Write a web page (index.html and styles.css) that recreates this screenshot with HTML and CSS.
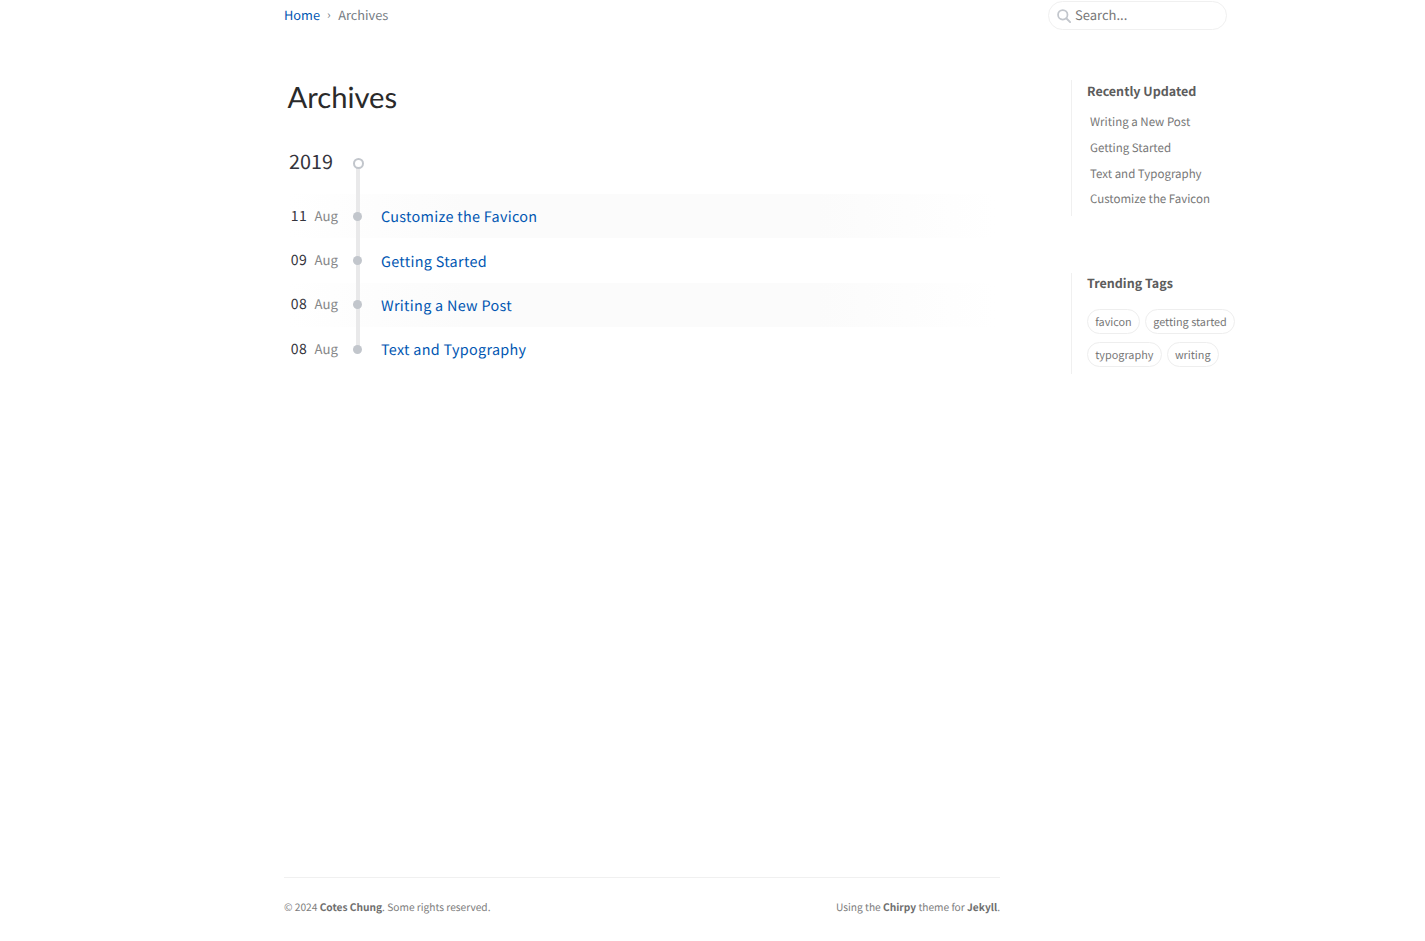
FILE: index.html
```html
<!DOCTYPE html>
<html lang="en">
<head>
<meta charset="utf-8">
<title>Archives</title>
<link rel="stylesheet" href="styles.css">
</head>
<body>
<div class="page">
  <div class="main-col">
    <nav class="breadcrumb"><a href="#">Home</a><span class="sep">›</span><span class="current">Archives</span></nav>
    <h1 class="title">Archives</h1>
    <div class="year">2019</div>
    <ul class="posts">
      <li><span class="day">11</span><span class="month">Aug</span><a href="#">Customize the Favicon</a></li>
      <li><span class="day">09</span><span class="month">Aug</span><a href="#">Getting Started</a></li>
      <li><span class="day">08</span><span class="month">Aug</span><a href="#">Writing a New Post</a></li>
      <li><span class="day">08</span><span class="month">Aug</span><a href="#">Text and Typography</a></li>
    </ul>
    <footer class="footer">
      <p>© 2024 <b>Cotes Chung</b>. Some rights reserved.</p>
      <p>Using the <b>Chirpy</b> theme for <b>Jekyll</b>.</p>
    </footer>
  </div>
  <div class="side-col">
    <div class="search">
      <svg class="search-icon" viewBox="0 0 16 16" width="14" height="14" aria-hidden="true"><circle cx="6.6" cy="6.6" r="5.4" fill="none" stroke="#c2c6cc" stroke-width="2"/><path d="M10.6 10.6 15 15" stroke="#c2c6cc" stroke-width="2.2" stroke-linecap="round"/></svg>
      <span class="search-text">Search...</span>
    </div>
    <section class="panel panel-updated">
      <h3>Recently Updated</h3>
      <ul class="recent">
        <li>Writing a New Post</li>
        <li>Getting Started</li>
        <li>Text and Typography</li>
        <li>Customize the Favicon</li>
      </ul>
    </section>
    <section class="panel panel-tags">
      <h3>Trending Tags</h3>
      <div class="tags">
        <a href="#">favicon</a><a href="#">getting started</a><a href="#">typography</a><a href="#">writing</a>
      </div>
    </section>
  </div>
</div>
</body>
</html>
```
FILE: styles.css
```css
*, *::before, *::after { box-sizing: border-box; }
html, body { margin: 0; height: 100%; }
body {
  background: #fff;
  color: #34343c;
  font-family: "Noto Sans CJK SC", "Noto Sans", sans-serif;
  text-rendering: geometricPrecision;
  overflow: hidden;
}
a { text-decoration: none; color: #0056b2; }
ul { list-style: none; margin: 0; padding: 0; }

.page {
  display: grid;
  grid-template-columns: 716px 200px;
  column-gap: 48px;
  height: 941px;
  padding-left: 284px;
}
.main-col { display: flex; flex-direction: column; height: 941px; }

.breadcrumb {
  display: flex;
  height: 30px;
  align-items: center;
  font-size: 12.8px;
  line-height: 20px;
  color: #757c83;
}
.sep { margin: 0 7.5px 0 7px; font-size: 12px; }

.title {
  margin: 47px 0 0 3.5px;
  font: 400 29.2px/42px Lato, sans-serif;
  color: #2a2a2a;
}

.year {
  margin: 27px 0 0 5px;
  font-size: 19.8px;
  line-height: 30px;
  color: #34343c;
  position: relative;
  height: 30px;
}
.year::after {
  content: "";
  position: absolute;
  left: 64px;
  top: 12px;
  width: 11px;
  height: 11px;
  border-radius: 50%;
  border: 2px solid #c2c6cc;
  background: #fff;
  z-index: 2;
}

.posts {
  margin: 18px 0 0 4px;
  width: 708px;
  position: relative;
}
.posts::before {
  content: "";
  position: absolute;
  left: 68px;
  top: -29px;
  bottom: 23px;
  width: 4px;
  background: #e9e9ea;
  z-index: 1;
}
.posts li {
  position: relative;
  display: flex;
  align-items: center;
  height: 44.3px;
}
.posts li:nth-child(odd) {
  background-image: linear-gradient(to left, #fff, #fbfbfb, #fbfbfb, #fbfbfb, #fff);
}
.posts li::after {
  content: "";
  position: absolute;
  left: 65px;
  top: 50%;
  width: 9px;
  height: 9px;
  margin-top: -4.5px;
  border-radius: 50%;
  background: #c2c6cc;
  z-index: 2;
}
.day {
  width: 19px;
  margin-top: -1px;
  text-align: right;
  font-size: 14px;
  line-height: 20px;
  letter-spacing: 0.3px;
  color: #34343c;
}
.month {
  margin: -1px 0 0 7.5px;
  width: 66.5px;
  font-size: 13.2px;
  line-height: 20px;
  color: #858688;
}
.posts a {
  margin-top: 2px;
  font-size: 14.4px;
  line-height: 22px;
  letter-spacing: 0.3px;
}
.posts li:nth-child(2) a { padding-top: 1px; }

.footer {
  margin-top: auto;
  margin-bottom: 25px;
  height: 39px;
  border-top: 1px solid #f0f0f0;
  display: flex;
  justify-content: space-between;
  align-items: flex-end;
  font-size: 10.2px;
  line-height: 18px;
  color: #7d7d7d;
}
.footer p { margin: 0; }
.footer b { font-weight: 600; color: #6e6e6e; }

.side-col { display: flex; flex-direction: column; width: 200px; }
.search {
  margin-top: 1px;
  width: 179px;
  height: 29px;
  border: 1px solid #f0f0f0;
  border-radius: 15px;
  display: flex;
  align-items: center;
  gap: 4px;
  padding-left: 8px;
  font-size: 13px;
  line-height: 20px;
  color: #777;
}
.search-text { margin-top: -2px; }
.panel {
  margin-left: 23px;
  width: 177px;
  border-left: 1px solid #f0f0f0;
  padding-left: 15px;
}
.panel h3 {
  margin: 0;
  font-size: 12.5px;
  font-weight: 600;
  line-height: 20px;
  color: #5c5c5c;
}
.panel-updated { margin-top: 50px; height: 136px; padding-top: 1px; }
.recent { margin: 8px 0 0 3px; }
.recent li {
  height: 25.8px;
  font-size: 11.5px;
  line-height: 26px;
  color: #777;
}
.panel-tags { margin-top: 57px; height: 101px; padding-top: 0; }
.tags {
  display: flex;
  flex-wrap: wrap;
  gap: 8px 5px;
  margin-top: 16px;
  width: 160px;
}
.tags a {
  height: 25px;
  padding: 0 7.25px;
  border: 1px solid #eee;
  border-radius: 13px;
  font-size: 10.85px;
  line-height: 25px;
  color: #777;
}
```
